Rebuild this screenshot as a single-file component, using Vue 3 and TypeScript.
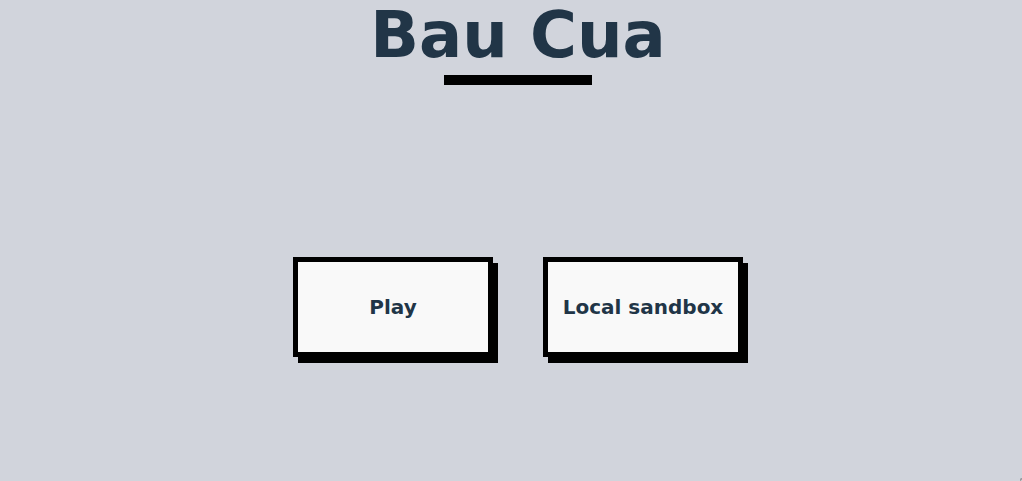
<script setup lang="ts">
interface MenuItem {
  label: string
  href: string
}

const menu: MenuItem[] = [
  { label: 'Play', href: '#play' },
  { label: 'Local sandbox', href: '#sandbox' },
]
</script>

<template>
  <main class="page">
    <h1 class="title">Bau Cua</h1>
    <nav class="menu">
      <a v-for="item in menu" :key="item.href" class="card" :href="item.href">{{ item.label }}</a>
    </nav>
    <span class="corner" aria-hidden="true"></span>
  </main>
</template>

<style>
body {
  background: #d1d4dc;
}
</style>

<style scoped>
.page {
  display: flex;
  flex-direction: column;
  align-items: center;
  min-height: 100vh;
  box-sizing: border-box;
  padding-left: 14px;
  color: #213547;
  font-family: "DejaVu Sans", sans-serif;
  font-weight: 700;
}

.title {
  display: flex;
  flex-direction: column;
  align-items: center;
  margin: 0;
  font-size: 64px;
  line-height: 70px;
}

.title::after {
  content: "";
  width: 148px;
  height: 10px;
  margin-top: 5px;
  background: #000;
}

.menu {
  flex: 1;
  display: flex;
  flex-wrap: wrap;
  align-items: center;
  justify-content: center;
  gap: 50px;
  padding-top: 48px;
}

.card {
  display: flex;
  align-items: center;
  justify-content: center;
  box-sizing: border-box;
  width: 200px;
  height: 100px;
  border: 5px solid #000;
  background: #f9f9f9;
  box-shadow: 5px 6px #000;
  color: inherit;
  font-size: 20px;
  text-decoration: none;
}

.corner {
  position: fixed;
  right: 0;
  bottom: 0;
  width: 2px;
  height: 3px;
  background: linear-gradient(135deg, #d1d4dc 0%, #8a8c92 50%, #f9f9f9 100%);
}
</style>
